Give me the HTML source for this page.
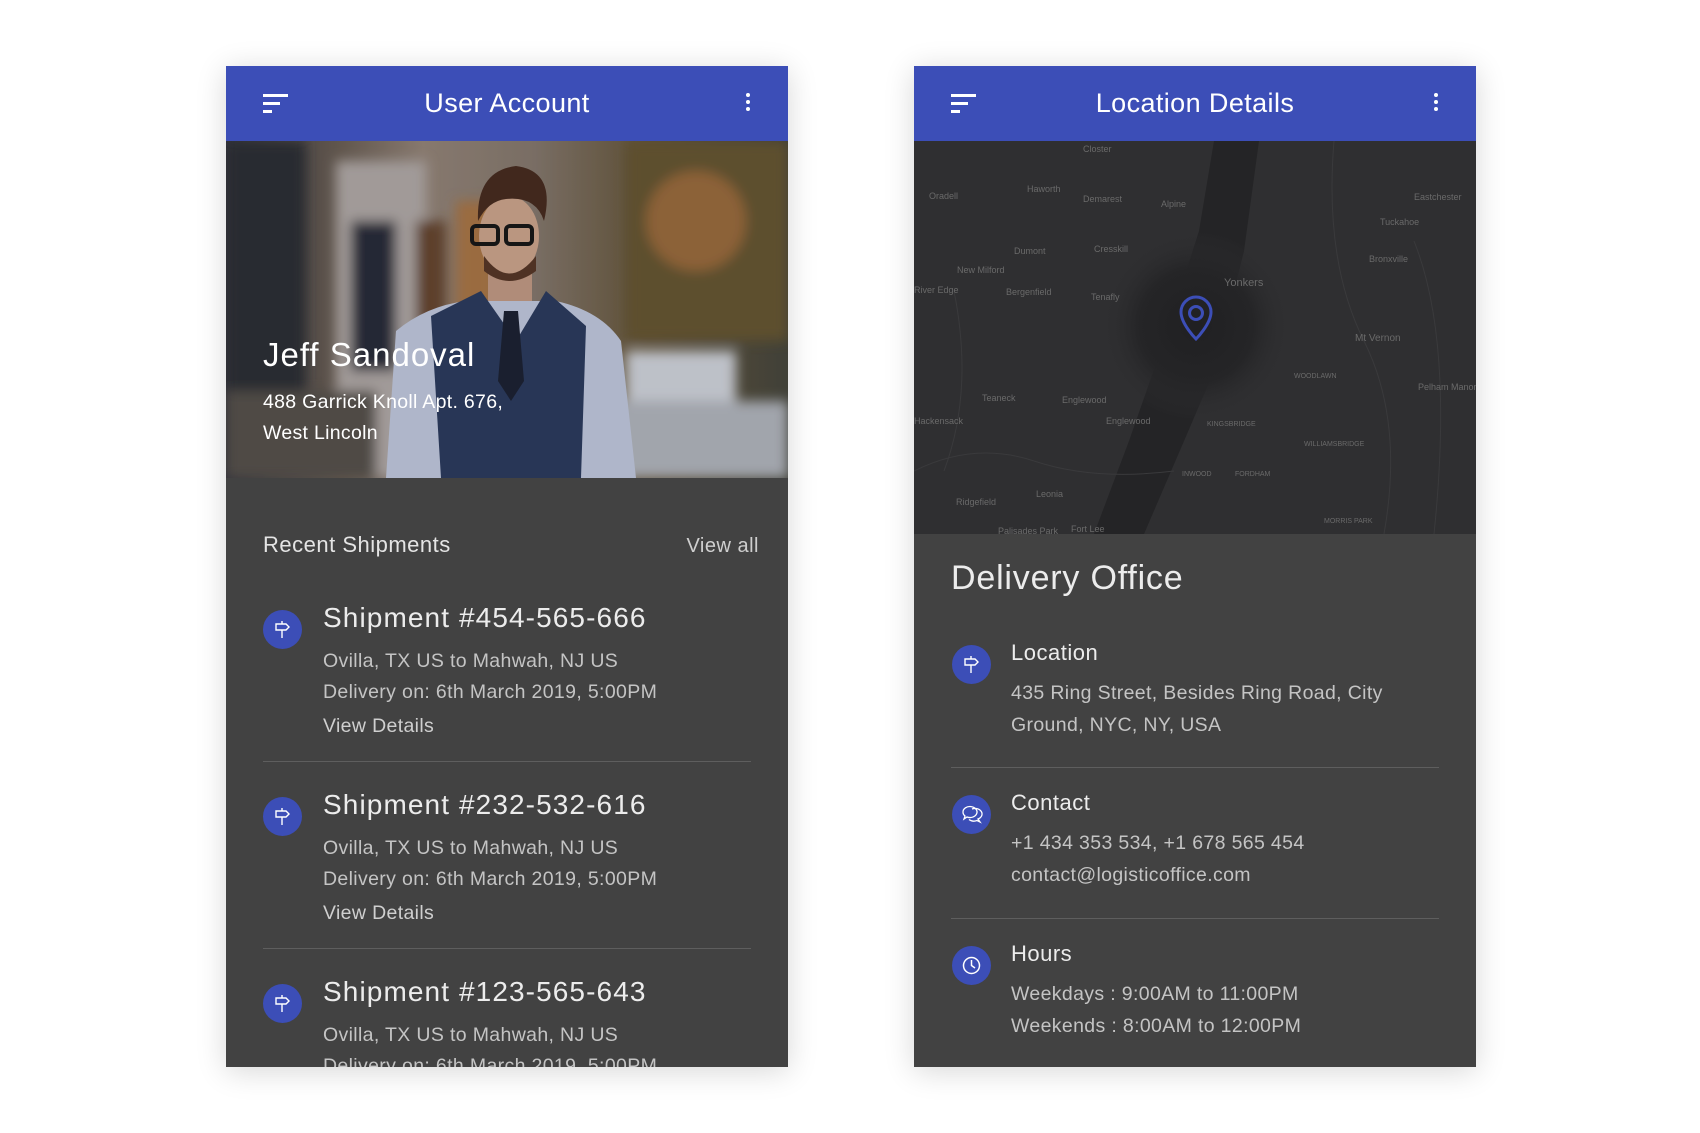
<!DOCTYPE html>
<html><head><meta charset="utf-8">
<style>
*{margin:0;padding:0;box-sizing:border-box}
body{width:1700px;height:1133px;background:#fff;position:relative;overflow:hidden;font-family:"Liberation Sans",sans-serif}
.phone{position:absolute;top:66px;width:562px;height:1001px;background:#424242;box-shadow:0 4px 28px rgba(0,0,0,.16);overflow:hidden}
.hdr{position:absolute;left:0;top:0;width:562px;height:75px;background:#3c4eb7;color:#fff}
.hdr .t{position:absolute;left:0;right:0;top:22px;text-align:center;font-size:27px;letter-spacing:.4px}
.ham{position:absolute;left:37px;top:28px}
.ham i{display:block;height:3px;background:#fff;margin-bottom:5px}
.dots{position:absolute;right:38px;top:27px;width:4px}
.dots i{display:block;width:4px;height:4px;border-radius:2px;background:#fff;margin-bottom:3px}
.abs{position:absolute;white-space:nowrap}
.ic{position:absolute;width:39px;height:39px;border-radius:50%;background:#3c4eb7}
.ic svg{position:absolute;left:0;top:0}
.h1{color:#ececec;font-size:28px;letter-spacing:1.1px}
.sub{color:#c4c4c4;font-size:19.5px;letter-spacing:.35px}
.div{position:absolute;height:1px;background:#5e5e5e}
.ml{position:absolute;color:#6a6a6a;font-size:9px;white-space:nowrap}
</style></head><body>

<!-- LEFT PHONE -->
<div class="phone" style="left:226px">
  <div style="position:absolute;left:0;top:75px;width:562px;height:337px;overflow:hidden">
    <svg width="562" height="337" viewBox="0 0 562 337">
      <defs>
        <linearGradient id="bg" x1="0" x2="1" y1="0" y2="0">
          <stop offset="0" stop-color="#3a3a44"/>
          <stop offset=".2" stop-color="#6e6258"/>
          <stop offset=".35" stop-color="#9a8a7e"/>
          <stop offset=".55" stop-color="#8a7d72"/>
          <stop offset=".75" stop-color="#6a5a3e"/>
          <stop offset="1" stop-color="#4a4a40"/>
        </linearGradient>
        <filter id="bl"><feGaussianBlur stdDeviation="6"/></filter>
      </defs>
      <rect width="562" height="337" fill="url(#bg)"/>
      <g filter="url(#bl)">
        <rect x="0" y="0" width="80" height="337" fill="#2e3038"/>
        <rect x="110" y="20" width="90" height="317" fill="#b8b0ae"/>
        <rect x="125" y="80" width="45" height="150" fill="#2c2f3c"/>
        <rect x="190" y="80" width="30" height="160" fill="#6a4a32"/>
        <rect x="230" y="60" width="40" height="170" fill="#b07a4a"/>
        <rect x="400" y="0" width="162" height="200" fill="#6a5a34"/>
        <circle cx="470" cy="80" r="50" fill="#a07040"/>
        <rect x="400" y="210" width="110" height="55" fill="#d8dce4"/>
        <rect x="380" y="260" width="182" height="77" fill="#b8bcc4"/>
        <rect x="0" y="250" width="150" height="87" fill="#5a5450"/>
      </g>
      <path d="M170 190 Q200 165 240 160 L330 160 Q375 170 395 200 L410 337 L160 337 Z" fill="#c8d0e6"/>
      <path d="M205 175 L255 150 L290 200 L320 150 L360 185 L355 337 L215 337 Z" fill="#2e3e62"/>
      <path d="M278 170 L292 170 L298 240 L285 260 L272 240 Z" fill="#1e2436"/>
      <rect x="262" y="115" width="44" height="45" fill="#c9a08a"/>
      <ellipse cx="283" cy="95" rx="30" ry="40" fill="#d4ab92"/>
      <path d="M252 80 Q250 30 290 25 Q330 30 318 80 Q310 55 280 58 Q262 60 252 80 Z" fill="#4a2e22"/>
      <path d="M258 115 Q283 150 310 115 L310 130 Q283 150 258 130 Z" fill="#5a3a2a"/>
      <rect x="246" y="85" width="26" height="18" rx="4" fill="none" stroke="#1a1a1a" stroke-width="4"/>
      <rect x="280" y="85" width="26" height="18" rx="4" fill="none" stroke="#1a1a1a" stroke-width="4"/>
      <rect x="0" y="0" width="562" height="337" fill="rgba(0,0,0,.12)"/>
    </svg>
    <div class="abs" style="left:37px;top:195px;color:#fff;font-size:33px;letter-spacing:1px">Jeff Sandoval</div>
    <div class="abs" style="left:37px;top:246px;color:#fff;font-size:19.5px;line-height:31px;letter-spacing:.3px">488 Garrick Knoll Apt. 676,<br>West Lincoln</div>
  </div>
  <div class="hdr">
    <div class="ham"><i style="width:25px"></i><i style="width:17px"></i><i style="width:9px"></i></div>
    <div class="t">User Account</div>
    <div class="dots"><i></i><i></i><i></i></div>
  </div>

  <div class="abs" style="left:37px;top:466px;color:#e4e4e4;font-size:22px;letter-spacing:.5px">Recent Shipments</div>
  <div class="abs" style="right:29px;top:469px;color:#cfcfcf;font-size:20px;letter-spacing:.5px">View all</div>

  <div class="ic" style="left:37px;top:544px"><svg width="39" height="39" viewBox="0 0 39 39" fill="none" stroke="#fff" stroke-width="1.4"><path d="M13 14 H23 L26 17 L23 20 H13 Z M19 20 V28 M19 11 V14"/></svg></div>
  <div class="abs h1" style="left:97px;top:536px">Shipment #454-565-666</div>
  <div class="abs sub" style="left:97px;top:580px;line-height:31px">Ovilla, TX US to Mahwah, NJ US<br>Delivery on: 6th March 2019, 5:00PM</div>
  <div class="abs sub" style="left:97px;top:649px;color:#cfcfcf">View Details</div>
  <div class="div" style="left:37px;top:695px;width:488px"></div>

  <div class="ic" style="left:37px;top:731px"><svg width="39" height="39" viewBox="0 0 39 39" fill="none" stroke="#fff" stroke-width="1.4"><path d="M13 14 H23 L26 17 L23 20 H13 Z M19 20 V28 M19 11 V14"/></svg></div>
  <div class="abs h1" style="left:97px;top:723px">Shipment #232-532-616</div>
  <div class="abs sub" style="left:97px;top:767px;line-height:31px">Ovilla, TX US to Mahwah, NJ US<br>Delivery on: 6th March 2019, 5:00PM</div>
  <div class="abs sub" style="left:97px;top:836px;color:#cfcfcf">View Details</div>
  <div class="div" style="left:37px;top:882px;width:488px"></div>

  <div class="ic" style="left:37px;top:918px"><svg width="39" height="39" viewBox="0 0 39 39" fill="none" stroke="#fff" stroke-width="1.4"><path d="M13 14 H23 L26 17 L23 20 H13 Z M19 20 V28 M19 11 V14"/></svg></div>
  <div class="abs h1" style="left:97px;top:910px">Shipment #123-565-643</div>
  <div class="abs sub" style="left:97px;top:954px;line-height:31px">Ovilla, TX US to Mahwah, NJ US<br>Delivery on: 6th March 2019, 5:00PM</div>
</div>

<!-- RIGHT PHONE -->
<div class="phone" style="left:914px">
  <div style="position:absolute;left:0;top:75px;width:562px;height:393px;background:#2f2f31;overflow:hidden">
    <svg width="562" height="393" viewBox="0 0 562 393" style="position:absolute;left:0;top:0">
      <defs><radialGradient id="rg"><stop offset="0" stop-color="#202022"/><stop offset=".6" stop-color="#252527"/><stop offset="1" stop-color="#2f2f31" stop-opacity="0"/></radialGradient></defs>
      <path d="M300 0 L345 0 L330 110 L300 230 L270 300 L230 393 L180 393 L215 300 L250 200 L285 90 Z" fill="#242426"/>
      <circle cx="282" cy="185" r="95" fill="url(#rg)"/>
      <path d="M0 330 Q60 300 120 320 T260 330 M40 150 Q60 250 30 330 M420 0 Q410 120 450 200 T470 393 M500 100 Q540 200 520 393" stroke="#3a3a3c" stroke-width="1" fill="none"/>
      <path d="M267 171 a15 15 0 0 1 30 0 c0 12 -15 27 -15 27 s-15 -15 -15 -27 z" fill="none" stroke="#3c4eb7" stroke-width="3"/>
      <circle cx="282" cy="172" r="6.5" fill="none" stroke="#3c4eb7" stroke-width="3"/>
    </svg>
    <div class="ml" style="left:15px;top:50px">Oradell</div>
    <div class="ml" style="left:113px;top:43px">Haworth</div>
    <div class="ml" style="left:169px;top:3px">Closter</div>
    <div class="ml" style="left:169px;top:53px">Demarest</div>
    <div class="ml" style="left:247px;top:58px">Alpine</div>
    <div class="ml" style="left:100px;top:105px">Dumont</div>
    <div class="ml" style="left:180px;top:103px">Cresskill</div>
    <div class="ml" style="left:43px;top:124px">New Milford</div>
    <div class="ml" style="left:0px;top:144px">River Edge</div>
    <div class="ml" style="left:92px;top:146px">Bergenfield</div>
    <div class="ml" style="left:177px;top:151px">Tenafly</div>
    <div class="ml" style="left:310px;top:136px;font-size:11px">Yonkers</div>
    <div class="ml" style="left:500px;top:51px">Eastchester</div>
    <div class="ml" style="left:466px;top:76px">Tuckahoe</div>
    <div class="ml" style="left:455px;top:113px">Bronxville</div>
    <div class="ml" style="left:441px;top:192px;font-size:10px">Mt Vernon</div>
    <div class="ml" style="left:504px;top:241px">Pelham Manor</div>
    <div class="ml" style="left:68px;top:252px">Teaneck</div>
    <div class="ml" style="left:148px;top:254px">Englewood</div>
    <div class="ml" style="left:192px;top:275px">Englewood</div>
    <div class="ml" style="left:0px;top:275px">Hackensack</div>
    <div class="ml" style="left:380px;top:232px;font-size:7px">WOODLAWN</div>
    <div class="ml" style="left:293px;top:280px;font-size:7px">KINGSBRIDGE</div>
    <div class="ml" style="left:390px;top:300px;font-size:7px">WILLIAMSBRIDGE</div>
    <div class="ml" style="left:268px;top:330px;font-size:7px">INWOOD</div>
    <div class="ml" style="left:321px;top:330px;font-size:7px">FORDHAM</div>
    <div class="ml" style="left:410px;top:377px;font-size:7px">MORRIS PARK</div>
    <div class="ml" style="left:122px;top:348px">Leonia</div>
    <div class="ml" style="left:42px;top:356px">Ridgefield</div>
    <div class="ml" style="left:84px;top:385px">Palisades Park</div>
    <div class="ml" style="left:157px;top:383px">Fort Lee</div>
  </div>
  <div class="hdr">
    <div class="ham"><i style="width:25px"></i><i style="width:17px"></i><i style="width:9px"></i></div>
    <div class="t">Location Details</div>
    <div class="dots"><i></i><i></i><i></i></div>
  </div>

  <div class="abs" style="left:37px;top:493px;color:#ececec;font-size:34px;letter-spacing:.8px">Delivery Office</div>

  <div class="ic" style="left:38px;top:579px"><svg width="39" height="39" viewBox="0 0 39 39" fill="none" stroke="#fff" stroke-width="1.4"><path d="M13 14 H23 L26 17 L23 20 H13 Z M19 20 V28 M19 11 V14"/></svg></div>
  <div class="abs" style="left:97px;top:574px;color:#ececec;font-size:22px;letter-spacing:.5px">Location</div>
  <div class="abs sub" style="left:97px;top:612px;line-height:31.5px">435 Ring Street, Besides Ring Road, City<br>Ground, NYC, NY, USA</div>
  <div class="div" style="left:37px;top:701px;width:488px"></div>

  <div class="ic" style="left:38px;top:729px"><svg width="39" height="39" viewBox="0 0 39 39" fill="none" stroke="#fff" stroke-width="1.3"><path d="M11 17 a7 5.5 0 1 1 4 5 l-3 2 1-3 a5 5 0 0 1-2-4z"/><path d="M20 14 a7 5.5 0 0 1 6 10 l2 3 -3-1.5 a7 5.5 0 0 1-8-1"/></svg></div>
  <div class="abs" style="left:97px;top:724px;color:#ececec;font-size:22px;letter-spacing:.5px">Contact</div>
  <div class="abs sub" style="left:97px;top:762px;line-height:31.5px">+1 434 353 534, +1 678 565 454<br>contact@logisticoffice.com</div>
  <div class="div" style="left:37px;top:852px;width:488px"></div>

  <div class="ic" style="left:38px;top:880px"><svg width="39" height="39" viewBox="0 0 39 39" fill="none" stroke="#fff" stroke-width="1.5"><circle cx="19.5" cy="19.5" r="8"/><path d="M19.5 14 V19.5 L23 22"/></svg></div>
  <div class="abs" style="left:97px;top:875px;color:#ececec;font-size:22px;letter-spacing:.5px">Hours</div>
  <div class="abs sub" style="left:97px;top:913px;line-height:31.5px">Weekdays : 9:00AM to 11:00PM<br>Weekends : 8:00AM to 12:00PM</div>
</div>

</body></html>
